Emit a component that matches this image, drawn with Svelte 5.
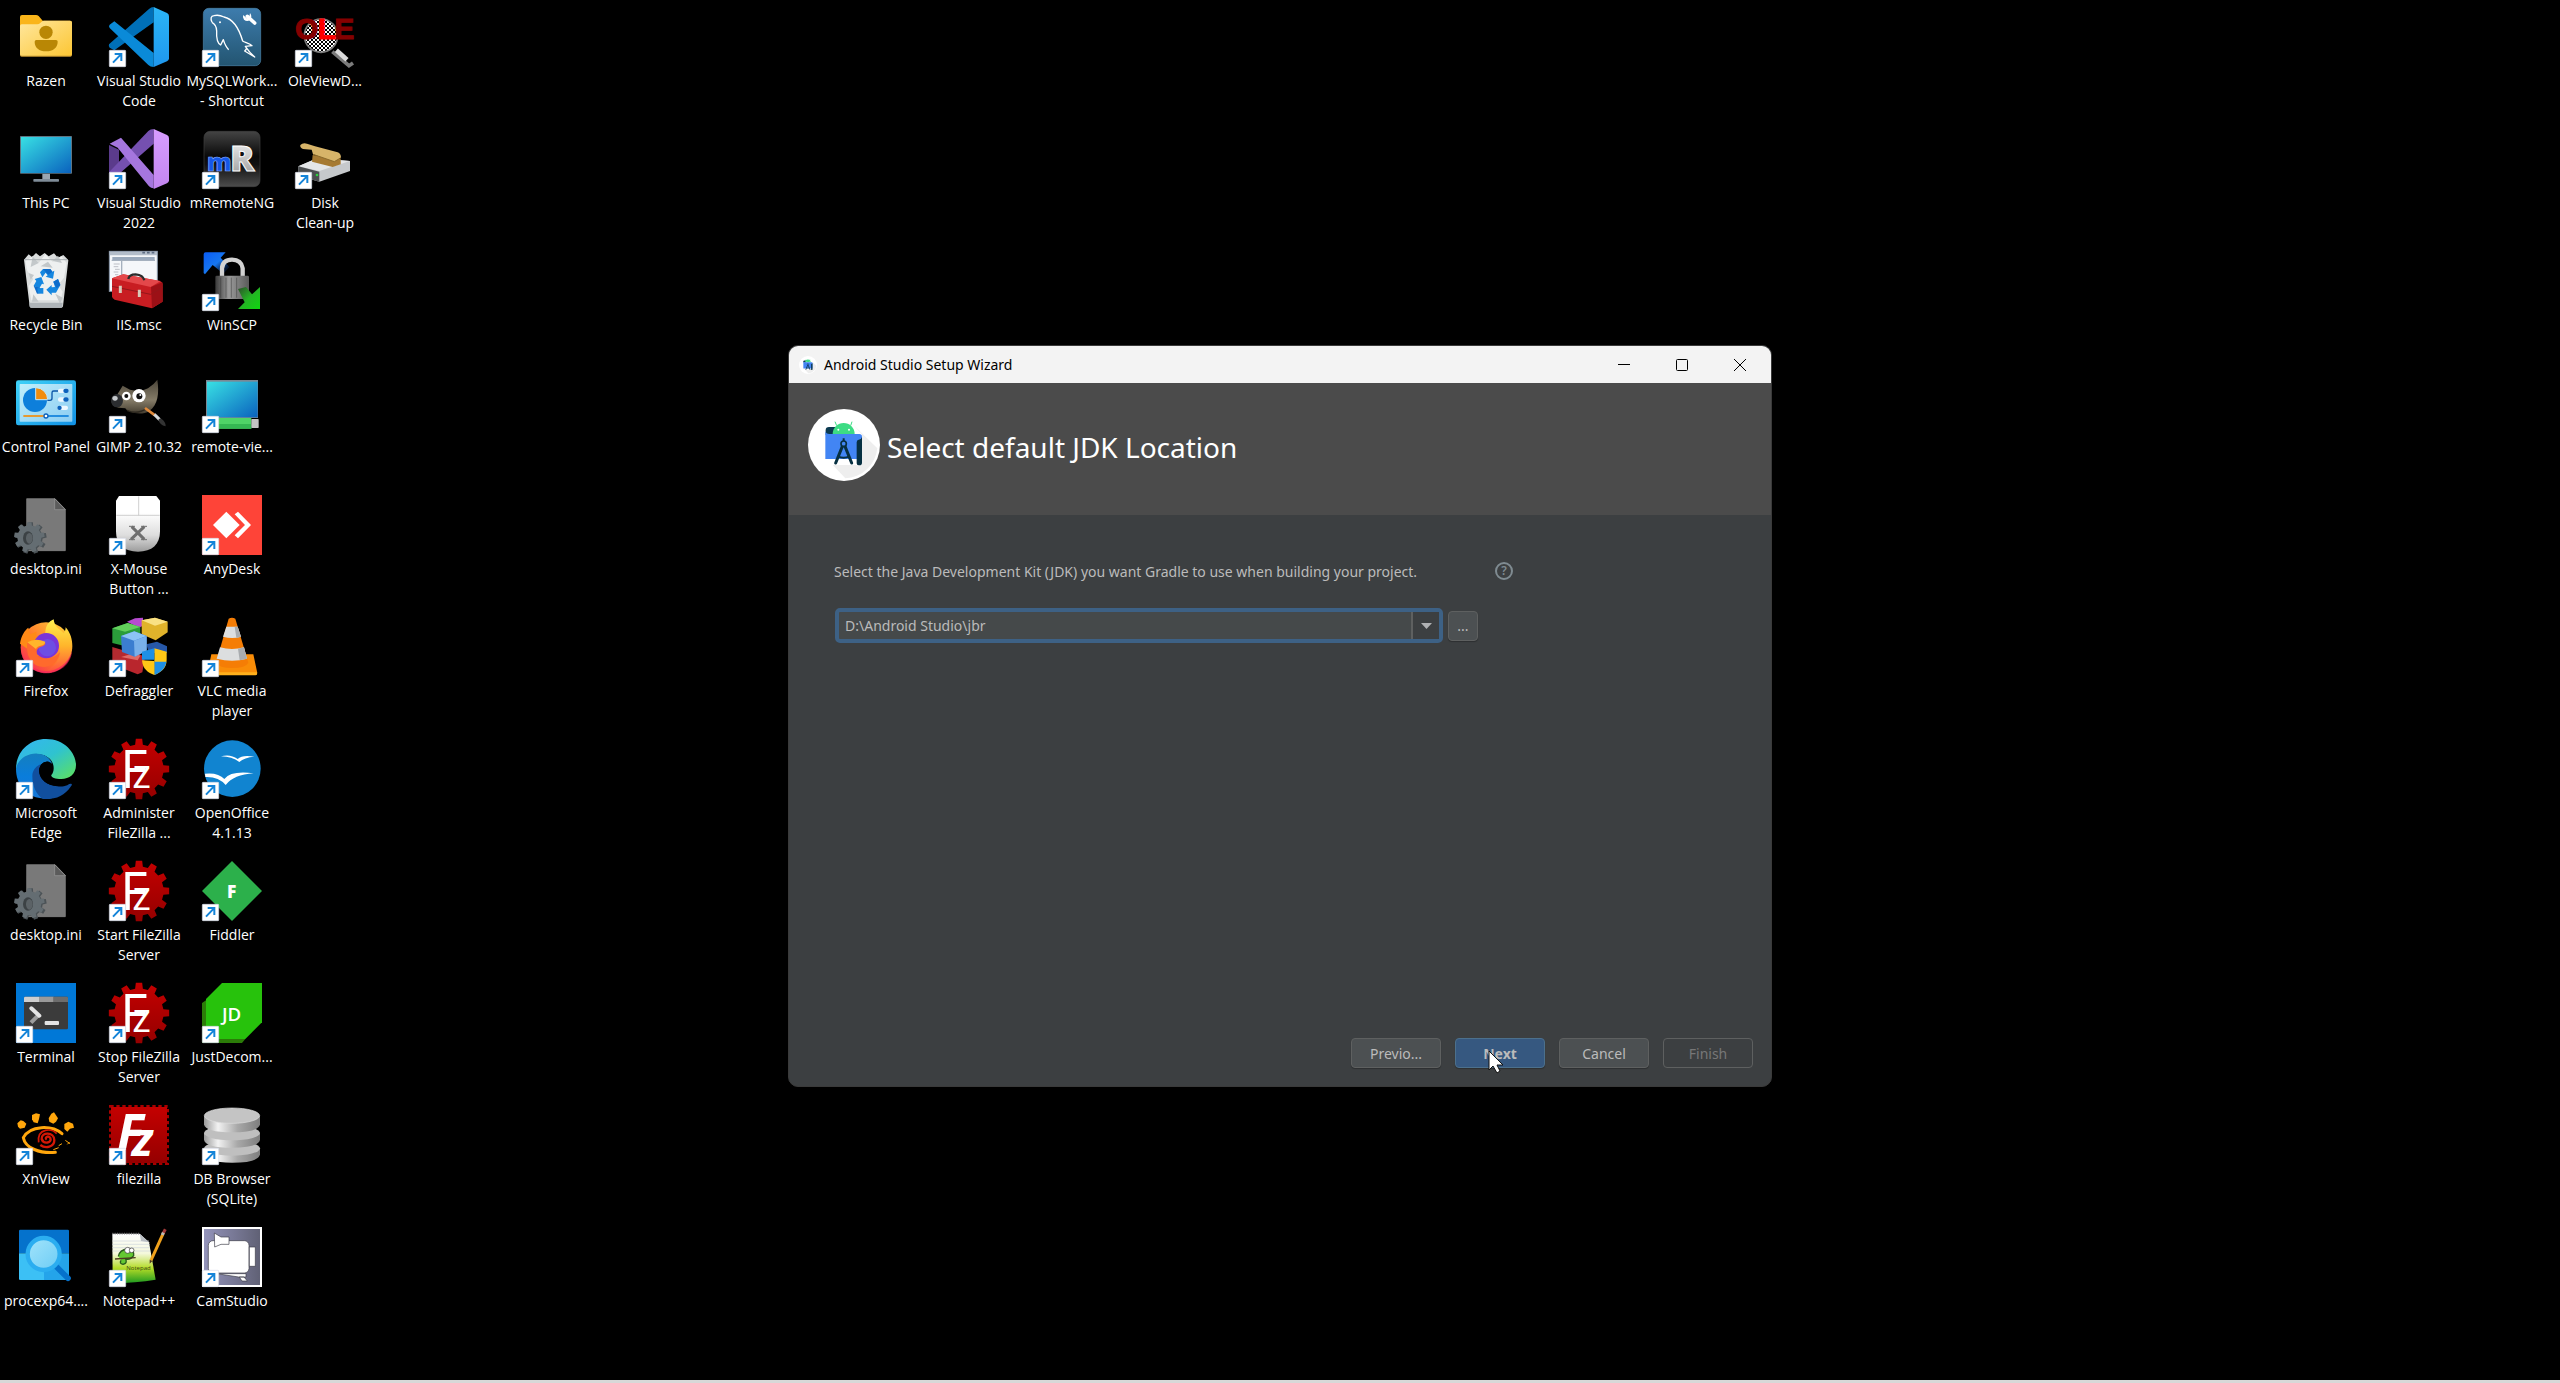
<script lang="ts">
  interface Shortcut {
    label: string;
    icon: string;
    link?: boolean;
  }

  // column by column, top to bottom
  const shortcuts: Shortcut[] = [
    { label: 'Razen', icon: 'folder' },
    { label: 'This PC', icon: 'pc' },
    { label: 'Recycle Bin', icon: 'bin' },
    { label: 'Control Panel', icon: 'control' },
    { label: 'desktop.ini', icon: 'ini' },
    { label: 'Firefox', icon: 'firefox', link: true },
    { label: 'Microsoft\nEdge', icon: 'edge', link: true },
    { label: 'desktop.ini', icon: 'ini' },
    { label: 'Terminal', icon: 'terminal', link: true },
    { label: 'XnView', icon: 'xnview', link: true },
    { label: 'procexp64....', icon: 'procexp' },

    { label: 'Visual Studio\nCode', icon: 'vscode', link: true },
    { label: 'Visual Studio\n2022', icon: 'vs', link: true },
    { label: 'IIS.msc', icon: 'iis' },
    { label: 'GIMP 2.10.32', icon: 'gimp', link: true },
    { label: 'X-Mouse\nButton ...', icon: 'mouse', link: true },
    { label: 'Defraggler', icon: 'defraggler', link: true },
    { label: 'Administer\nFileZilla ...', icon: 'fzserver', link: true },
    { label: 'Start FileZilla\nServer', icon: 'fzserver', link: true },
    { label: 'Stop FileZilla\nServer', icon: 'fzserver', link: true },
    { label: 'filezilla', icon: 'filezilla', link: true },
    { label: 'Notepad++', icon: 'notepad', link: true },

    { label: 'MySQLWork...\n- Shortcut', icon: 'mysql', link: true },
    { label: 'mRemoteNG', icon: 'mremote', link: true },
    { label: 'WinSCP', icon: 'winscp', link: true },
    { label: 'remote-vie...', icon: 'viewer', link: true },
    { label: 'AnyDesk', icon: 'anydesk', link: true },
    { label: 'VLC media\nplayer', icon: 'vlc', link: true },
    { label: 'OpenOffice\n4.1.13', icon: 'openoffice', link: true },
    { label: 'Fiddler', icon: 'fiddler', link: true },
    { label: 'JustDecom...', icon: 'jd', link: true },
    { label: 'DB Browser\n(SQLite)', icon: 'db', link: true },
    { label: 'CamStudio', icon: 'camstudio', link: true },

    { label: 'OleViewD...', icon: 'ole', link: true },
    { label: 'Disk\nClean-up', icon: 'disk', link: true },
  ];

  let jdkPath = $state('D:\\Android Studio\\jbr');

  function gear(cx: number, cy: number, outer: number, inner: number, teeth: number): string {
    const step = (Math.PI * 2) / teeth;
    const points: string[] = [];
    for (let i = 0; i < teeth; i++) {
      const mid = i * step - Math.PI / 2;
      const corners = [
        [inner, -0.3],
        [outer, -0.2],
        [outer, 0.2],
        [inner, 0.3],
      ];
      for (const [radius, offset] of corners) {
        const angle = mid + offset * step;
        points.push(`${(cx + radius * Math.cos(angle)).toFixed(1)},${(cy + radius * Math.sin(angle)).toFixed(1)}`);
      }
    }
    return points.join(' ');
  }
</script>

{#snippet glyph(name: string)}
  {#if name === 'folder'}
    <path d="M12 100V30q0-6 6-6h42q5 0 8 3l12 14h82q6 0 6 6v60z" fill="#fab51a" />
    <path d="M12 57q0-5 5-5h47q5 0 8-3l5-5q3-3 7-3h78q6 0 6 6v96q0 5-5 5H17q-5 0-5-5z" fill="url(#g-folder)" />
    <path d="M12 144q0 5 5 5h146q5 0 5-5v-2q0 4-5 4H17q-5 0-5-4z" fill="#b88a2e" />
    <circle cx="90" cy="76" r="20" fill="#b98705" />
    <path d="M61 99h59q5 0 5 5c0 18-14 29-35 29s-34-11-34-29q0-5 5-5z" fill="#b98705" />
  {:else if name === 'pc'}
    <path d="M79 134h23v18H79z" fill="#9aa5b0" />
    <rect x="52" y="150" width="77" height="8" rx="2" fill="#7f8c98" />
    <rect x="12" y="21" width="156" height="113" rx="2" fill="#5f7482" />
    <rect x="15" y="24" width="150" height="108" fill="url(#g-screen)" />
  {:else if name === 'bin'}
    <path d="M24 26l14-16 10 8 12-12 12 10 14-10 12 10 16-9 12 13 16-8 12 12 3 4-16 138q-1 4-5 4H46q-4 0-5-4z" fill="#d9dcdc" />
    <path d="M28 30l22-14 18 20 20-26 22 22 26-16 16 20-8 44-18 22 14 20-6 26H46l-8-42 14-22-18-24z" fill="#eef0f0" />
    <path d="M50 16l18 20-24 12zM110 30l16-16 12 22zM52 130l16 22H48zM118 128l22 12-8 18zM74 46l22-14 14 18zM38 66l16 6-10 14z" fill="#c3c8ca" />
    <path d="M40 155h100l-1 12q-1 3-5 3H46q-4 0-5-3z" fill="#aeb4b8" />
    <path d="M24 26h131" stroke="#aab0b4" stroke-width="3" />
    <path d="M72 64l9-10h22l6 8 6-3-4 24-22-6 6-4-6-8-10 14z" fill="#1687e0" />
    <path d="M81 54h22l6 8-12 9z" fill="#0d6ccb" />
    <path d="M56 84l20-6 8 22-6-2-8 14-17-8 8-14z" fill="#1687e0" />
    <path d="M53 104l18 6 10 16-18 2z" fill="#0d6ccb" />
    <path d="M64 112l18-1v17l-16-1zM112 92l14-8 7 18-13 23h-13v8l-16-17 16-14v7l10-1z" fill="#1687e0" />
    <path d="M126 84l7 18-11 10-10-20z" fill="#0d6ccb" />
  {:else if name === 'control'}
    <rect y="22" width="180" height="135" rx="7" fill="url(#g-control)" />
    <rect x="11" y="33" width="158" height="113" rx="2" fill="url(#g-control-in)" />
    <circle cx="57" cy="81" r="36" fill="#0d7fdb" />
    <path d="M59 44v36h36a36 36 0 0 0-36-36z" fill="#f28c0c" stroke="#c3e8fa" stroke-width="3" />
    <path d="M94 82h8q6 0 6-6V59q0-5 5-5h14" fill="none" stroke="#0b55a8" stroke-width="4" />
    <g fill="#eef8ff">
      <rect x="126" y="47" width="32" height="13" rx="6" />
      <rect x="126" y="73" width="32" height="13" rx="6" />
      <rect x="124" y="98" width="32" height="13" rx="6" />
    </g>
    <g fill="#0b62bd">
      <rect x="142" y="47" width="16" height="13" rx="6" />
      <rect x="142" y="73" width="16" height="13" rx="6" />
      <rect x="124" y="98" width="13" height="13" rx="6" />
    </g>
    <path d="M22 129h68" stroke="#f28c0c" stroke-width="5" />
    <path d="M90 129h68" stroke="#0d7fdb" stroke-width="5" />
    <circle cx="90" cy="129" r="6" fill="#fff" stroke="#0b62bd" stroke-width="4" />
  {:else if name === 'ini'}
    <path d="M32 11h85l31 32v124H32z" fill="#797979" stroke="#8c8c8c" stroke-width="2" />
    <path d="M116 11v33h32z" fill="#5b5b5b" stroke="#9a9a9a" stroke-width="2" />
    <polygon points={gear(44, 129, 48, 36, 9)} fill="#4b5256" />
    <polygon points={gear(40, 127, 46, 36, 9)} fill="#646d72" />
    <ellipse cx="36" cy="129" rx="15" ry="20" fill="#3c4245" />
    <ellipse cx="40" cy="130" rx="10" ry="16" fill="#5b6266" />
  {:else if name === 'firefox'}
    <circle cx="90" cy="92" r="76" fill="url(#g-fox)" />
    <path d="M12 80C16 55 26 40 37 32l6 20 18-8v14l26 10-20 50z" fill="#ff8a16" />
    <path d="M88 50C88 26 98 14 113 7c2 22 16 28 30 42 4-4 6-12 6-18 14 16 20 36 20 56 0 42-30 76-70 80-20-6 32-20 34-58-6-36-26-58-45-59z" fill="url(#g-flame)" />
    <circle cx="91" cy="86" r="38" fill="#7a35d8" />
    <circle cx="94" cy="92" r="26" fill="#6a55e6" opacity=".8" />
    <path d="M34 76q28-10 52 0 6 6-6 12-16 4-18 14-2 24 26 24 26 0 44-20-8 42-48 44c-34 0-56-30-50-74z" fill="#ff6a2c" />
    <path d="M34 76q24-14 54-2-2 10-14 12-12 2-14 10z" fill="#ffb52b" />
    <path d="M16 106c10 38 42 56 74 56 34 0 66-22 78-60-2 40-38 67-78 67-36 0-68-26-74-63z" fill="#f7235f" opacity=".65" />
  {:else if name === 'edge'}
    <path d="M0 95C-2 40 38 0 90 0c58 0 90 44 90 78 0 28-20 42-44 42-20 0-32-6-30-12 14-16 8-52-26-60C46 42 8 60 0 95z" fill="url(#g-edge-top)" />
    <path d="M0 90C4 62 34 42 64 44c22 0 40 14 44 30-14-10-30-6-38 10-10 38 24 68 48 90-10 6-28 6-42 4C30 172 0 136 0 90z" fill="url(#g-edge-left)" />
    <path d="M49 112c0-20 14-32 26-36-18 32 10 64 46 64 20 0 34-6 44-6 4 0 3 4 0 8-20 30-46 40-84 38-20-12-32-38-32-68z" fill="#114f9e" />
    <path d="M70 88c4-14 16-22 28-20 12 4 16 22 6 36-2 14 14 22 40 20 16-2 20-8 26-2-10 20-30 22-46 20-34-2-58-26-54-54z" />
  {:else if name === 'terminal'}
    <rect width="180" height="180" fill="#0078d7" />
    <rect x="24" y="41" width="132" height="98" rx="4" fill="#3b3b3b" />
    <path d="M24 57V45q0-4 4-4h41v16z" fill="#cfcfcf" />
    <path d="M69 41h44v16H69z" fill="#9a9a9a" />
    <path d="M113 41h39q4 0 4 4v12h-43z" fill="#6d6d6d" />
    <path d="M45 119l24-24" stroke="#9d9d9d" stroke-width="12" />
    <path d="M46 76l24 22" stroke="#e3e3e3" stroke-width="12" stroke-linecap="round" />
    <rect x="86" y="114" width="43" height="12" rx="3" fill="#e3e3e3" />
  {:else if name === 'xnview'}
    <g fill="#ffa60c">
      <path d="M4 55l10-9 8 2 9 8-5 12-14 3-6-6z" />
      <path d="M48 30l12-5 12 3-3 14-4 13-12-3-5-9z" />
      <path d="M98 40l8-14 8-4 12 18-6 10-8 6-12-6z" />
      <path d="M145 57l12-7 14 6 3 12-12 3-8 9-9-8z" />
    </g>
    <path d="M138 86C108 60 42 60 22 98c6 32 50 48 96 44" fill="none" stroke="#ffa60c" stroke-width="9" stroke-linecap="round" />
    <path d="M112 134l16-6M128 122l10-6M148 106l14 10M154 118l6-6" stroke="#ffa60c" stroke-width="3" fill="none" />
    <path d="M92 104c-8-6 4-14 11-5 6 15-20 20-26 3-2-22 38-22 38 4 0 20-26 26-42 14" fill="none" stroke="#d31806" stroke-width="7" />
    <path d="M68 112q-4-30 20-36 22-4 34 10" fill="none" stroke="#d31806" stroke-width="5" />
  {:else if name === 'procexp'}
    <path d="M9 12q0-4 4-4h142q4 0 4 4v67H9z" fill="#0572cc" />
    <path d="M9 79h75v80H13q-4 0-4-4z" fill="#3cc0f5" />
    <path d="M84 79h75v76q0 4-4 4H84z" fill="#24a4ea" />
    <path d="M120 118l36 36" stroke="#0572cc" stroke-width="17" stroke-linecap="round" />
    <circle cx="83" cy="81" r="48" fill="url(#g-lens)" stroke="#2badf0" stroke-width="13" />
  {:else if name === 'vscode'}
    <path d="M0 112q-2 6 2 10l14 8 118-84V0q-8 0-14 6z" fill="#0070b8" />
    <path d="M16 43L2 53q-4 4 0 10l116 111q6 6 16 6v-42z" fill="#0a8ad8" />
    <path d="M134 0l40 18q6 3 6 10v126q0 6-6 9l-40 17z" fill="url(#g-vsc)" />
  {:else if name === 'vs'}
    <path d="M0 48l30 14v56L0 132z" fill="#5b3b8c" />
    <path d="M134 0v44L24 140l-14 2-10-12 118-124q6-6 16-6z" fill="#7550b0" />
    <path d="M2 44l34-18 98 112v40q-8 0-14-6L26 56z" fill="#a576de" />
    <path d="M134 0l40 18q6 3 6 10v126q0 6-6 9l-40 17z" fill="url(#g-vs)" />
  {:else if name === 'iis'}
    <rect x="1" y="1" width="144" height="120" fill="#f5f7fa" stroke="#8896a8" stroke-width="3" />
    <path d="M2 2h142v11H2z" fill="#b3bdca" />
    <path d="M10 18h127v10H10z" fill="#9aa9bc" />
    <path d="M38 28v92M8 28h130" stroke="#a5b0be" stroke-width="4" />
    <path d="M14 39h18M14 47h14M18 55h14M14 63h14M18 71h10" stroke="#a0a5ac" stroke-width="2" />
    <path d="M100 5h8M114 5h8M128 5h8" stroke="#5e6d84" stroke-width="5" />
    <path d="M9 82l34-12 108 20q10 2 10 10v52l-32 20-112-26q-8-2-8-10z" fill="#c81d22" />
    <path d="M9 82l34-12 112 20-30 18z" fill="#e4474a" />
    <path d="M126 108l34-14v58l-31 20z" fill="#9c1016" />
    <path d="M9 106l116 24 35-20" fill="none" stroke="#93161a" stroke-width="3" />
    <path d="M58 84q2-14 22-14 22 2 26 18" fill="none" stroke="#2c2c2c" stroke-width="7" />
    <path d="M34 104v22M91 116v22" stroke="#d8c8b8" stroke-width="9" />
  {:else if name === 'gimp'}
    <path d="M41 38l22 12q34 8 54-4 18-12 28-26c6 40 2 76-24 94-24 16-66 4-72-8l-20-2Q8 98 8 86q0-16 16-20z" fill="url(#g-gimp)" />
    <ellipse cx="24" cy="83" rx="18" ry="20" fill="#2b2d30" />
    <ellipse cx="18" cy="76" rx="8" ry="7" fill="#c5c9cc" />
    <circle cx="52" cy="69" r="13" fill="#fff" />
    <circle cx="52" cy="69" r="6" fill="#111" />
    <circle cx="90" cy="68" r="20" fill="#fff" />
    <circle cx="91" cy="70" r="9" fill="#111" />
    <circle cx="94" cy="66" r="3" fill="#fff" />
    <path d="M54 112q30 14 60-6" fill="none" stroke="#2d281f" stroke-width="4" />
    <path d="M108 105l30 22" stroke="#e08a3c" stroke-width="8" />
    <path d="M136 124l16 16" stroke="#d7d9db" stroke-width="9" />
    <path d="M148 140q6-6 10-2 12 8 12 22-18-4-22-20z" fill="#333" />
  {:else if name === 'mouse'}
    <path d="M30 3h112l11 14v92c0 40-24 61-66 61s-66-21-66-61V17z" fill="url(#g-mouse)" />
    <path d="M22 61h130M89 4v57" stroke="#b9b9b9" stroke-width="2" />
    <path d="M68 95l38 38M106 95l-40 38" stroke="#6e6e6e" stroke-width="9" />
    <path d="M60 94h18M96 94h18M60 134h18M96 134h18" stroke="#6e6e6e" stroke-width="3" />
  {:else if name === 'defraggler'}
    <path d="M54 14l24-10 24-2v24l-12 6z" fill="#b64bd0" />
    <path d="M10 90l40 12 30 10v36l-36 4-34-20z" fill="#b32a30" />
    <path d="M10 34L56 18l38 12v26l-30 4-14 28-40-10z" fill="#2a9d3a" />
    <path d="M10 34l46-16 38 12-46 14z" fill="#63cf5c" />
    <path d="M98 10l40-8 38 12v32l-36 24-42-18z" fill="#e0b32b" />
    <path d="M98 10l40-8 38 12-38 12z" fill="#f9e184" />
    <path d="M36 114l48-6 24 12-8 46-14 6-50-20z" fill="#b9262d" />
    <path d="M36 120l50 10 8-14-18-8z" fill="#e06a66" />
    <path d="M112 82l32-8 30 14v20h-54z" fill="#2758a8" />
    <path d="M36 57l40-14 37 14v44l-36 18-38-14z" fill="#3b7dd0" />
    <path d="M36 57l40-14 37 14-38 14z" fill="#8cc3f5" />
    <path d="M75 71l38-14v44l-36 18z" fill="#79b0ea" />
    <path d="M136 94l37 10v24c0 26-18 38-37 46z" fill="#ffc717" />
    <path d="M136 94l-37 10v24h37zM136 134h36c-3 22-19 33-36 40z" fill="#1e8fe6" />
    <path d="M99 130c2 26 18 38 37 44v-42z" fill="#ffc717" />
  {:else if name === 'fzserver'}
    <polygon points={gear(90, 90, 91, 74, 12)} fill="url(#g-fz)" />
    <text y="147" fill="#fff" class="thin">
      <tspan x="34" font-size="158">F</tspan><tspan x="70" font-size="120">z</tspan>
    </text>
  {:else if name === 'filezilla'}
    <rect x="4" y="4" width="172" height="172" fill="none" stroke="#a80000" stroke-width="8" stroke-dasharray="10 8" />
    <rect x="6" y="6" width="168" height="168" fill="url(#g-fz)" />
    <text fill="#fff" class="slab">
      <tspan x="24" y="134" font-size="150">F</tspan><tspan x="68" y="154" font-size="140">z</tspan>
    </text>
  {:else if name === 'notepad'}
    <path d="M10 20h82l28 26 20 112q-60 10-129 10z" fill="url(#g-note)" />
    <path d="M10 42h110M10 52h112M10 62h112M10 72h114" stroke="#cfd4dc" stroke-width="2" />
    <path d="M10 20h82" stroke="#777" stroke-width="5" stroke-dasharray="3 4" />
    <path d="M92 20l28 26-24-4z" fill="#b9bec4" />
    <path d="M28 88q4-20 28-22 20 2 18 20-10 14-24 10 6 14-8 16-12-2-6-12" fill="#64c832" stroke="#285c1c" stroke-width="4" />
    <circle cx="56" cy="70" r="9" fill="#fff" stroke="#333" stroke-width="2" />
    <circle cx="68" cy="70" r="7" fill="#fff" stroke="#333" stroke-width="2" />
    <path d="M18 96l62-4" stroke="#4c3a20" stroke-width="4" />
    <text x="52" y="130" font-size="18" fill="#3a4416" class="thin">Notepad</text>
    <path d="M126 100l38-84" stroke="#f0a11c" stroke-width="9" />
    <path d="M163 18l6-11" stroke="#a43a3a" stroke-width="9" />
    <path d="M160 24l3-7" stroke="#b9b9b9" stroke-width="9" />
    <path d="M122 98l8 4-8 8z" fill="#51361c" />
  {:else if name === 'mysql'}
    <rect x="4" y="4" width="172" height="172" rx="16" fill="url(#g-sql)" stroke="#4d87ad" stroke-width="2" />
    <path d="M30 46q-8-18 6-20 14-4 30 4c28 6 46 38 56 72 6 4 22 8 28 14l-20 2q12 18 28 32l-30-18q4-4 6-8" fill="none" stroke="#fff" stroke-width="4" stroke-linejoin="round" />
    <path d="M30 46q14 8 14 26-2 34 12 42l8-16q6 20 16 30" fill="none" stroke="#fff" stroke-width="4" stroke-linejoin="round" />
    <circle cx="54" cy="46" r="3" fill="#fff" />
    <path d="M136 28l22 20" stroke="#fff" stroke-width="11" stroke-linecap="round" />
    <path d="M124 24l10 10 8-4 2-12q8 10 0 20-8 8-18 0-6-6-2-14z" fill="#fff" />
  {:else if name === 'mremote'}
    <rect x="6" y="7" width="168" height="166" rx="18" fill="url(#g-mr)" stroke="#3f3f3f" stroke-width="2" />
    <text y="126" class="heavy">
      <tspan x="15" font-size="74" fill="#1557e8" stroke="#8db2ff" stroke-width="2">m</tspan><tspan x="84" font-size="108" fill="url(#g-silver)" stroke="#fff" stroke-width="3">R</tspan>
    </text>
  {:else if name === 'winscp'}
    <path d="M5 10q0-6 6-6h60L56 20l26 28-18 20-32-26L9 70l-4-4z" fill="url(#g-wblue)" />
    <path d="M60 78V52q2-26 30-26t32 26v26" fill="none" stroke="#d2d2d2" stroke-width="13" />
    <rect x="40" y="74" width="101" height="70" rx="4" fill="url(#g-lock)" />
    <path d="M56 80v60M72 80v60M104 80v60M88 80v60" stroke="#3b3b3b" stroke-width="3" opacity=".5" />
    <path d="M108 114l24-6 18 22 24-22v66h-66l20-20z" fill="url(#g-wgreen)" />
  {:else if name === 'viewer'}
    <rect x="12" y="21" width="156" height="114" fill="#7b8894" />
    <rect x="15" y="26" width="152" height="107" fill="url(#g-screen)" />
    <rect x="40" y="135" width="108" height="32" fill="#4fd467" />
    <path d="M40 153h108v14H40z" fill="#35b853" />
    <rect x="148" y="138" width="22" height="27" rx="2" fill="#c4c4c4" />
  {:else if name === 'anydesk'}
    <rect width="180" height="180" fill="#fe4438" />
    <path d="M73 50l40 40-40 40-40-40z" fill="#fff" />
    <path d="M98 58l10-8 39 40-39 40-10-9 31-31z" fill="#fff" />
  {:else if name === 'vlc'}
    <path d="M28 112h126l12 56q0 6-6 6H20q-6 0-4-6z" fill="#f98c07" />
    <path d="M17 166h148v5q0 4-5 4H20z" fill="#ffb01c" />
    <path d="M80 5q10-5 20 0l39 132q-8 16-48 16t-49-16z" fill="#f57d05" />
    <path d="M73 29h34l10 30q-26 8-54 0zM54 91q36 10 72 0l9 34q-44 12-91 0z" fill="#dcdedf" />
    <path d="M98 29h9l10 30q-8 3-14 3zM108 95l18-4 9 34-22 5z" fill="#a9acaf" />
  {:else if name === 'openoffice'}
    <circle cx="91" cy="89" r="85" fill="#1184d0" />
    <path d="M57 52q28-8 50 8 14-14 50-7-30 2-45 16-22-16-55-17zM9 104q40-4 58 16 20-26 88-17-60 4-84 35-22-26-61-24z" fill="#fff" />
  {:else if name === 'fiddler'}
    <path d="M90 0l90 90-90 90L0 90z" fill="#2cb04b" />
    <text x="75" y="111" font-size="52" fill="#fff" class="heavy">F</text>
  {:else if name === 'jd'}
    <path d="M0 60L12 52v70l50 46h68l-10 12H0z" fill="#2b7c08" />
    <path d="M60 0h120v118l-50 50H12V48z" fill="#27c20c" />
    <text x="60" y="113" font-size="56" fill="#fff" class="bold">JD</text>
  {:else if name === 'db'}
    <path d="M6 130v18q4 25 84 25t84-25v-18z" fill="url(#g-db)" />
    <ellipse cx="90" cy="130" rx="84" ry="22" fill="#bfbfbf" />
    <path d="M6 84v20q4 24 84 24t84-24V84z" fill="url(#g-db)" />
    <ellipse cx="90" cy="84" rx="84" ry="22" fill="#bfbfbf" />
    <path d="M6 34v24q4 24 84 24t84-24V34z" fill="url(#g-db)" />
    <ellipse cx="90" cy="32" rx="83" ry="23" fill="#c4c4c4" stroke="#dedede" stroke-width="2" />
  {:else if name === 'camstudio'}
    <rect x="3" y="3" width="174" height="174" fill="url(#g-cam)" stroke="#fff" stroke-width="6" />
    <rect x="19" y="41" width="122" height="97" rx="14" fill="#fff" stroke="#3b3b46" stroke-width="2" />
    <path d="M37 18l20 12h24v22H57L38 60zM142 60h18v58h-18zM44 140h88v10H110zM112 150h14l10 12h-16z" fill="#fff" stroke="#3b3b46" stroke-width="2" />
  {:else if name === 'ole'}
    <circle cx="78" cy="86" r="50" fill="url(#g-check)" stroke="#7c7c7c" stroke-width="5" />
    <text y="96" font-size="90" class="ole" stroke-width="3">
      <tspan x="0" fill="#850000" stroke="#850000">O</tspan><tspan x="68" fill="#f00" stroke="#f00">L</tspan><tspan x="118" fill="#850000" stroke="#850000">E</tspan>
    </text>
    <path d="M112 134l50 42 12-8" stroke="#7c7c7c" stroke-width="11" fill="none" />
    <path d="M124 130l32 28" stroke="#dcdcdc" stroke-width="14" />
  {:else if name === 'disk'}
    <path d="M10 112l56-24 99 8v30l-92 32-62-18z" fill="#c6c9cc" />
    <path d="M10 112l56-24 99 8-92 30z" fill="#e4e6e8" />
    <path d="M10 112l63 16v30l-62-18z" fill="#4b4e50" />
    <circle cx="66" cy="138" r="4" fill="#2ed03e" />
    <path d="M53 78l84 12v16l-24 8-62-16z" fill="#a67a32" />
    <path d="M16 48q8-8 20-4l24 8 68 18q10 4 10 16l-20 12-64-22-4-14-26-2q-10-4-8-12z" fill="#d7b469" />
    <path d="M54 76l64 22 20-12" fill="none" stroke="#8a6a2c" stroke-width="3" />
  {/if}
{/snippet}

{#snippet studioLogo()}
  <svg class="studio" viewBox="0 0 216 216" aria-hidden="true">
    <circle cx="108" cy="108" r="108" fill="#fff" />
    <path d="M128 40l80 78a100 100 0 0 1-96 90L74 168h88V76z" fill="#eee" />
    <path d="M53 64q0-10 10-10h24v24H53z" fill="#0b3a50" />
    <path d="M86 50l-5-12M128 50l4-12" stroke="#3ddc84" stroke-width="3" />
    <path d="M74 75a33 33 0 0 1 66 0z" fill="#3ddc84" />
    <circle cx="91" cy="62" r="3" fill="#fff" />
    <circle cx="123" cy="62" r="3" fill="#fff" />
    <path d="M52 66q2 9 12 9h90q8 0 8 8v67H52z" fill="#4285f4" />
    <path d="M162 84q-2 8-10 8-6 0-6 8v63q0 6 6 6h2q8 0 8-8z" fill="#073042" />
    <path d="M103 112l-20 50M111 112l20 50" stroke="#073042" stroke-width="9" stroke-linecap="round" />
    <path d="M90 142q17 8 34 0M107 88v8" fill="none" stroke="#073042" stroke-width="6" />
    <circle cx="107" cy="104" r="8" fill="#4285f4" stroke="#073042" stroke-width="5" />
  </svg>
{/snippet}

<!-- gradients shared by all icons -->
<svg class="defs" width="0" height="0" aria-hidden="true">
  <defs>
    <linearGradient id="g-folder" x1="0" y1="0" x2="1" y2="1"><stop stop-color="#ffe79e" /><stop offset="1" stop-color="#fcc633" /></linearGradient>
    <linearGradient id="g-screen" x1="0" y1="0" x2="1" y2="1"><stop stop-color="#38e0e4" /><stop offset="1" stop-color="#0a62be" /></linearGradient>
    <linearGradient id="g-control" x1="0" y1="0" x2="1" y2="1"><stop stop-color="#3fd2f8" /><stop offset="1" stop-color="#1190e4" /></linearGradient>
    <linearGradient id="g-control-in" x1="0" y1="0" x2="1" y2="1"><stop stop-color="#bfeefb" /><stop offset="1" stop-color="#8ccdf2" /></linearGradient>
    <linearGradient id="g-fox" x1="1" y1="0" x2="0" y2="1"><stop stop-color="#ffdc3a" /><stop offset=".6" stop-color="#ff6c2a" /><stop offset="1" stop-color="#f5156c" /></linearGradient>
    <linearGradient id="g-flame" x1="0" y1="0" x2="0" y2="1"><stop stop-color="#fff04f" /><stop offset=".5" stop-color="#ffb52b" /><stop offset="1" stop-color="#ff4f3d" /></linearGradient>
    <linearGradient id="g-edge-top" x1="0" y1="0" x2="1" y2="1"><stop stop-color="#35b4f4" /><stop offset=".5" stop-color="#2fc3cf" /><stop offset="1" stop-color="#5fe25a" /></linearGradient>
    <linearGradient id="g-edge-left" x1="0" y1="0" x2="0" y2="1"><stop stop-color="#147fbf" /><stop offset=".5" stop-color="#0a7ddb" /><stop offset="1" stop-color="#1677d8" /></linearGradient>
    <linearGradient id="g-lens" x1="0" y1="0" x2="1" y2="1"><stop stop-color="#a3e4fb" /><stop offset="1" stop-color="#6cccf5" /></linearGradient>
    <linearGradient id="g-vsc" x1="0" y1="0" x2="0" y2="1"><stop stop-color="#2bb5f6" /><stop offset="1" stop-color="#1f97ee" /></linearGradient>
    <linearGradient id="g-vs" x1="0" y1="0" x2="0" y2="1"><stop stop-color="#d79dff" /><stop offset="1" stop-color="#c285f0" /></linearGradient>
    <linearGradient id="g-gimp" x1="0" y1="0" x2="0" y2="1"><stop stop-color="#4a4438" /><stop offset=".6" stop-color="#857c68" /><stop offset="1" stop-color="#453e31" /></linearGradient>
    <linearGradient id="g-mouse" x1="0" y1="0" x2="0" y2="1"><stop offset=".3" stop-color="#fff" /><stop offset=".7" stop-color="#dedede" /><stop offset="1" stop-color="#9c9c9c" /></linearGradient>
    <linearGradient id="g-fz" x1="0" y1="0" x2="0" y2="1"><stop stop-color="#c40000" /><stop offset="1" stop-color="#950000" /></linearGradient>
    <linearGradient id="g-note" x1="0" y1="0" x2="0" y2="1"><stop stop-color="#fff" /><stop offset=".4" stop-color="#f4f8dc" /><stop offset=".7" stop-color="#b4dc28" /><stop offset="1" stop-color="#1f9a20" /></linearGradient>
    <linearGradient id="g-sql" x1="0" y1="0" x2="0" y2="1"><stop stop-color="#3d7cad" /><stop offset="1" stop-color="#235571" /></linearGradient>
    <linearGradient id="g-mr" x1="0" y1="0" x2="0" y2="1"><stop stop-color="#444" /><stop offset=".45" stop-color="#0a0a0a" /><stop offset=".6" stop-color="#111" /><stop offset="1" stop-color="#4c4c4c" /></linearGradient>
    <linearGradient id="g-silver" x1="0" y1="0" x2="0" y2="1"><stop stop-color="#fff" /><stop offset="1" stop-color="#8f8f8f" /></linearGradient>
    <linearGradient id="g-wblue" x1="0" y1="0" x2="1" y2="1"><stop stop-color="#0a5cf5" /><stop offset=".5" stop-color="#1676f0" /><stop offset=".8" stop-color="#04142e" /></linearGradient>
    <linearGradient id="g-wgreen" x1="0" y1="0" x2="1" y2="1"><stop stop-color="#2d4d2b" /><stop offset=".5" stop-color="#24b524" /><stop offset="1" stop-color="#0fd60f" /></linearGradient>
    <linearGradient id="g-lock" x1="0" y1="0" x2="1" y2="0"><stop stop-color="#3a3a3a" /><stop offset=".4" stop-color="#9b9b9b" /><stop offset="1" stop-color="#5a5a5a" /></linearGradient>
    <linearGradient id="g-db" x1="0" y1="0" x2="1" y2="0"><stop stop-color="#9a9a9a" /><stop offset=".25" stop-color="#f2f2f2" /><stop offset=".6" stop-color="#a8a8a8" /><stop offset="1" stop-color="#7e7e7e" /></linearGradient>
    <linearGradient id="g-cam" x1="0" y1="0" x2="1" y2="0"><stop stop-color="#9494bb" /><stop offset="1" stop-color="#5f6074" /></linearGradient>
    <pattern id="g-check" width="12" height="12" patternUnits="userSpaceOnUse">
      <rect width="12" height="12" fill="#fff" />
      <path d="M0 0h6v6H0zM6 6h6v6H6z" />
    </pattern>
  </defs>
</svg>

<div class="screen">
  <main class="desktop">
    <ul class="shortcuts">
      {#each shortcuts as item}
        <li>
          <button class="shortcut">
            <svg class="icon" viewBox="0 0 180 180" aria-hidden="true">
              {@render glyph(item.icon)}
              {#if item.link}
                <rect x="1" y="130" width="49" height="49" rx="2" fill="#fff" stroke="#d5dbe8" stroke-width="2" />
                <path d="M12 167l23-24M17 141h20v21" fill="none" stroke="#1484d8" stroke-width="6" />
              {/if}
            </svg>
            <span class="label">{item.label}</span>
          </button>
        </li>
      {/each}
    </ul>

    <section class="window" aria-label="Android Studio Setup Wizard">
      <header class="titlebar">
        <span class="app-icon">{@render studioLogo()}</span>
        <span class="title">Android Studio Setup Wizard</span>
        <div class="controls">
          <button aria-label="Minimize">
            <svg viewBox="0 0 12 12"><path d="M0 5.5h12" /></svg>
          </button>
          <button aria-label="Maximize">
            <svg viewBox="0 0 12 12"><rect x=".5" y=".5" width="11" height="11" rx="1" /></svg>
          </button>
          <button aria-label="Close">
            <svg viewBox="0 0 12 12"><path d="M0 0l12 12M12 0L0 12" /></svg>
          </button>
        </div>
      </header>

      <div class="banner">
        <span class="banner-icon">{@render studioLogo()}</span>
        <h1>Select default JDK Location</h1>
      </div>

      <form class="page" onsubmit={(event) => event.preventDefault()}>
        <div class="prompt">
          <label for="jdk-path">Select the Java Development Kit (JDK) you want Gradle to use when building your project.</label>
          <button type="button" class="help" aria-label="Help">?</button>
        </div>
        <div class="picker">
          <div class="combo">
            <input id="jdk-path" type="text" bind:value={jdkPath} />
            <button type="button" class="drop" aria-label="Show locations">
              <svg viewBox="0 0 11 6"><path d="M0 0h11L5.5 6z" /></svg>
            </button>
          </div>
          <button type="button" class="btn browse" aria-label="Browse">...</button>
        </div>
        <footer class="actions">
          <button type="button" class="btn">Previo...</button>
          <button type="submit" class="btn primary">
            Next
            <svg class="cursor" viewBox="0 0 16 24" aria-hidden="true">
              <path d="M1 1v19l4-4 4 7 3-2-3-6h6z" />
            </svg>
          </button>
          <button type="button" class="btn">Cancel</button>
          <button type="button" class="btn" disabled>Finish</button>
        </footer>
      </form>
    </section>
  </main>
  <div class="taskbar"></div>
</div>

<style>
  :global(body) {
    background: #000;
  }

  .defs {
    position: absolute;
  }

  .screen {
    display: flex;
    flex-direction: column;
    min-height: 100vh;
    background: #000;
    font-family: 'Open Sans', 'Noto Sans', sans-serif;
    font-size: 14px;
  }

  .screen button,
  .screen input {
    font: inherit;
    box-sizing: border-box;
  }

  .desktop {
    position: relative;
    flex: 1;
  }

  .taskbar {
    height: 3px;
    background: #d8d8d8;
  }

  .shortcuts {
    display: grid;
    grid-auto-flow: column;
    grid-template-rows: repeat(11, 122px);
    grid-auto-columns: 93px;
    margin: 0;
    padding: 7px 0 0;
    list-style: none;
  }

  .shortcut {
    display: flex;
    flex-direction: column;
    align-items: center;
    gap: 4px;
    width: 100%;
    padding: 0 1px 0 0;
    border: 0;
    background: transparent;
    color: #fff;
  }

  .icon {
    width: 60px;
    height: 60px;
    overflow: visible;
  }

  .label {
    line-height: 20px;
    white-space: pre;
  }

  .thin {
    font-family: 'Open Sans', sans-serif;
  }

  .bold {
    font-family: 'Open Sans', sans-serif;
    font-weight: 600;
  }

  .heavy {
    font-family: 'Open Sans', sans-serif;
    font-weight: 800;
  }

  .slab {
    font-family: 'Open Sans', sans-serif;
    font-weight: 700;
    font-style: italic;
  }

  .ole {
    font-family: 'Liberation Sans', sans-serif;
    font-weight: 700;
  }

  .window {
    position: absolute;
    top: 345px;
    left: 788px;
    display: flex;
    flex-direction: column;
    width: 982px;
    height: 740px;
    overflow: hidden;
    border: 1px solid #3a3a3a;
    border-radius: 10px;
    background: #3c3f41;
    color: #bbb;
    font-family: 'Noto Sans', 'Open Sans', sans-serif;
  }

  .titlebar {
    display: flex;
    align-items: center;
    height: 37px;
    padding: 0 2px 0 10px;
    background: #f3f3f3;
    color: #000;
  }

  .studio {
    display: block;
    width: 100%;
    height: 100%;
  }

  .app-icon {
    width: 18px;
    height: 18px;
    margin-right: 7px;
  }

  .controls {
    display: flex;
    height: 100%;
    margin-left: auto;
  }

  .controls button {
    display: grid;
    place-items: center;
    width: 58px;
    padding: 0;
    border: 0;
    background: transparent;
  }

  .controls svg {
    width: 12px;
    height: 12px;
    fill: none;
    stroke: #000;
    overflow: visible;
  }

  .banner {
    display: flex;
    align-items: flex-start;
    gap: 7px;
    height: 132px;
    box-sizing: border-box;
    padding: 26px 19px;
    background: #4b4b4b;
  }

  .banner-icon {
    width: 72px;
    height: 72px;
  }

  h1 {
    margin: 0;
    color: #fff;
    font-size: 28px;
    font-weight: 400;
    line-height: 76px;
  }

  .page {
    display: flex;
    flex: 1;
    flex-direction: column;
    padding: 45px 18px 18px 45px;
  }

  .prompt {
    display: flex;
    align-items: center;
    justify-content: space-between;
    width: 679px;
    height: 22px;
  }

  .help {
    width: 18px;
    height: 18px;
    padding: 0;
    border: 2px solid #7f8b91;
    border-radius: 50%;
    background: transparent;
    color: #7f8b91;
    line-height: 14px;
  }

  .screen .help {
    font-size: 12px;
    font-weight: 600;
    line-height: 14px;
  }

  .picker {
    display: flex;
    align-items: center;
    gap: 5px;
    margin: 26px 0 0 1px;
  }

  .combo {
    display: flex;
    width: 608px;
    height: 35px;
    box-sizing: border-box;
    border: 4px solid #3d6185;
    border-radius: 5px;
    background: #45494a;
  }

  .combo input {
    flex: 1;
    min-width: 0;
    padding: 0 6px;
    border: 0;
    outline: 0;
    background: transparent;
    color: #bbb;
  }

  .drop {
    display: grid;
    place-items: center;
    width: 28px;
    padding: 0;
    border: 0;
    border-left: 2px solid #5e6060;
    background: #3c3f41;
  }

  .drop svg {
    width: 11px;
    height: 6px;
    fill: #afb1b3;
  }

  .btn {
    position: relative;
    width: 90px;
    height: 30px;
    padding: 0;
    border: 1px solid #5e6060;
    border-radius: 4px;
    background: #4c5052;
    box-shadow: 0 1px 1px rgba(0, 0, 0, 0.25);
    color: #bbb;
  }

  .browse {
    width: 30px;
  }

  .primary {
    border-color: #4c708c;
    background: #365880;
  }

  .screen .primary {
    font-weight: 700;
  }

  .btn:disabled {
    background: transparent;
    color: #777;
    box-shadow: none;
  }

  .actions {
    display: flex;
    justify-content: flex-end;
    gap: 14px;
    margin-top: auto;
  }

  /* pointer resting on the default button */
  .cursor {
    position: absolute;
    top: 11px;
    left: 32px;
    width: 16px;
    height: 24px;
    fill: #fff;
    stroke: #111;
  }
</style>
